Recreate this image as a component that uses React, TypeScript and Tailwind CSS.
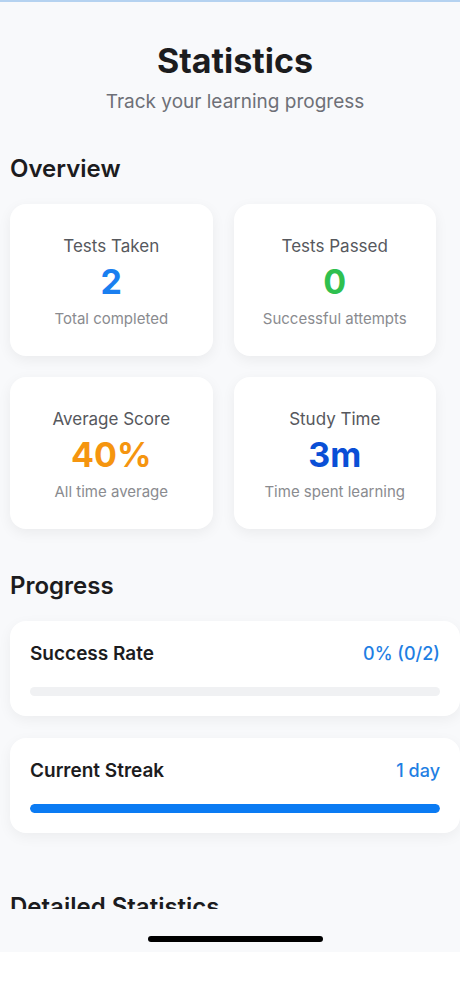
import React from "react";

const font = { fontFamily: "Inter, 'Noto Sans', 'Liberation Sans', sans-serif" };

function StatCard({ label, value, sub, color }: { label: string; value: string; sub: string; color: string }) {
  return (
    <div className="flex h-[152px] flex-col items-center rounded-[16px] bg-white pt-[31px] shadow-[0_4px_14px_rgba(0,0,0,0.06)]">
      <div className="text-[17px] leading-[22px] text-[#56585d]">{label}</div>
      <div className={`mt-[5px] text-[34px] font-bold leading-[40px] ${color}`}>{value}</div>
      <div className="mt-[7px] text-[15px] leading-[20px] text-[#8a8b8f]">{sub}</div>
    </div>
  );
}

function ProgressCard({ label, value, pct }: { label: string; value: string; pct: number }) {
  return (
    <div className="ml-[10px] w-[450px] rounded-[16px] bg-white px-[20px] pt-[21px] pb-[20px] shadow-[0_4px_14px_rgba(0,0,0,0.05)]">
      <div className="flex items-center justify-between">
        <span className="text-[19px] font-semibold leading-[24px] text-[#1c1c1e]">{label}</span>
        <span className="text-[18px] font-medium leading-[24px] text-[#1f7fe3]">{value}</span>
      </div>
      <div className="mt-[21px] h-[9px] w-full overflow-hidden rounded-full bg-[#f0f1f3]">
        <div className="h-full rounded-full bg-[#0b7bf3]" style={{ width: `${pct}%` }} />
      </div>
    </div>
  );
}

export default function App() {
  return (
    <div className="relative h-[999px] w-[460px] overflow-hidden bg-white" style={font}>
      <div className="h-[952px] bg-[#f8f9fb]">
        <div className="h-[909px] overflow-hidden">
          <div className="h-[2px] bg-[#b5d2f0]" />
          <div className="pl-[10px] pt-[38px] text-center">
            <h1 className="text-[34px] font-bold leading-[42px] text-[#1c1c1e]">Statistics</h1>
            <p className="mt-[8px] text-[19px] leading-[24px] text-[#6e7077]">Track your learning progress</p>
          </div>
          <h2 className="mt-[40px] px-[10px] text-[24px] font-semibold leading-[30px] text-[#1c1c1e]">Overview</h2>
          <div className="mt-[20px] grid w-[436px] grid-cols-2 gap-[21px] pl-[10px]">
            <StatCard label="Tests Taken" value="2" sub="Total completed" color="text-[#1a7ff0]" />
            <StatCard label="Tests Passed" value="0" sub="Successful attempts" color="text-[#2fc04f]" />
            <StatCard label="Average Score" value="40%" sub="All time average" color="text-[#f5950f]" />
            <StatCard label="Study Time" value="3m" sub="Time spent learning" color="text-[#0a4fd6]" />
          </div>
          <h2 className="mt-[42px] px-[10px] text-[24px] font-semibold leading-[30px] text-[#1c1c1e]">Progress</h2>
          <div className="mt-[20px] flex flex-col gap-[22px]">
            <ProgressCard label="Success Rate" value="0% (0/2)" pct={0} />
            <ProgressCard label="Current Streak" value="1 day" pct={100} />
          </div>
          <h2 className="mt-[59px] px-[10px] text-[24px] font-semibold leading-[30px] text-[#1c1c1e]">Detailed Statistics</h2>
        </div>
        <div className="flex justify-center pl-[10px] pt-[27px]">
          <div className="h-[6px] w-[175px] rounded-full bg-black" />
        </div>
      </div>
    </div>
  );
}
